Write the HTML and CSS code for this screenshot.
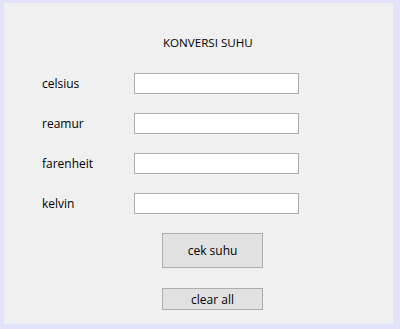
FILE: index.html
```html
<!DOCTYPE html>
<html lang="en">
<head>
    <meta charset="UTF-8">
    <title>Konversi Suhu</title>
    <link rel="stylesheet" href="styles.css">
</head>
<body>
    <div class="window">
        <h1 class="title">KONVERSI SUHU</h1>

        <form class="form">
            <div class="row">
                <label for="celsius">celsius</label>
                <input type="text" id="celsius">
            </div>
            <div class="row">
                <label for="reamur">reamur</label>
                <input type="text" id="reamur">
            </div>
            <div class="row">
                <label for="farenheit">farenheit</label>
                <input type="text" id="farenheit">
            </div>
            <div class="row">
                <label for="kelvin">kelvin</label>
                <input type="text" id="kelvin">
            </div>

            <div class="actions">
                <button type="button" class="btn btn-big">cek suhu</button>
                <button type="button" class="btn btn-small">clear all</button>
            </div>
        </form>
    </div>
</body>
</html>
```

FILE: styles.css
```css
* { box-sizing: border-box; }
body {
    margin: 0;
    background: #e2e2fa;
    font-family: 'Open Sans', 'Liberation Sans', sans-serif;
    font-size: 12px;
    color: #000;
}
.window {
    margin: 3px 0 0 4px;
    width: 389px;
    height: 321px;
    background: #f0f0f0;
    padding: 33px 0 0 38px;
}
.title {
    margin: 0 0 23px 121px;
    font-size: 11.6px;
    font-weight: normal;
    line-height: 14px;
}
.form {
    display: flex;
    flex-direction: column;
    gap: 19px;
}
.row {
    display: grid;
    grid-template-columns: 92px 165px;
    align-items: center;
    height: 21px;
}
.row label { line-height: 14px; }
.row input {
    width: 165px;
    height: 21px;
    margin: 0;
    border: 1px solid #adadad;
    background: #fff;
    font: inherit;
    padding: 0 3px;
}
.actions {
    display: flex;
    flex-direction: column;
    align-items: flex-start;
    gap: 20px;
    margin-left: 120px;
}
.btn {
    width: 101px;
    margin: 0;
    background: #e1e1e1;
    border: 1px solid #adadad;
    font: inherit;
    color: #000;
    padding: 0;
}
.btn-big { height: 35px; }
.btn-small { height: 22px; }
```
